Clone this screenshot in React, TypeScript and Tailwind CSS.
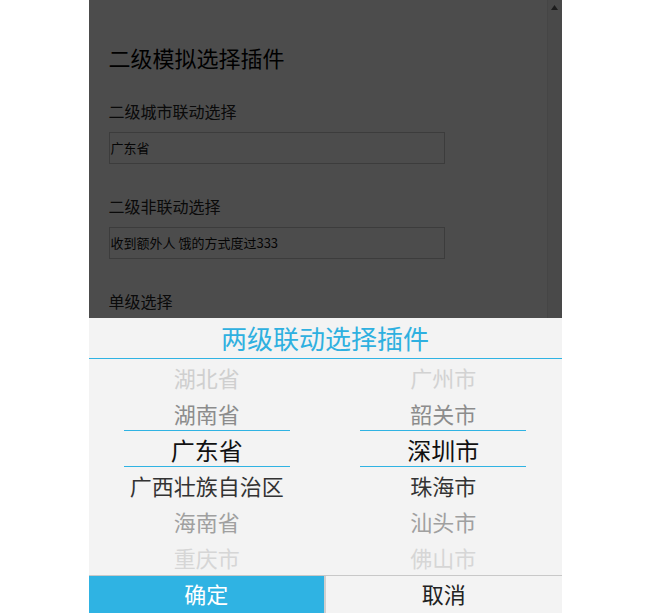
import React from "react";

const font = { fontFamily: '"Noto Sans CJK SC", "Noto Sans", sans-serif' };

type Item = { t: string; c: string; sel?: boolean };

const left: Item[] = [
  { t: "湖北省", c: "text-[#cfcfcf]" },
  { t: "湖南省", c: "text-[#8c8c8c]" },
  { t: "广东省", c: "text-[#111111]", sel: true },
  { t: "广西壮族自治区", c: "text-[#333333]" },
  { t: "海南省", c: "text-[#a0a0a0]" },
  { t: "重庆市", c: "text-[#d6d6d6]" },
];

const right: Item[] = [
  { t: "广州市", c: "text-[#d2d2d2]" },
  { t: "韶关市", c: "text-[#8c8c8c]" },
  { t: "深圳市", c: "text-[#111111]", sel: true },
  { t: "珠海市", c: "text-[#333333]" },
  { t: "汕头市", c: "text-[#a0a0a0]" },
  { t: "佛山市", c: "text-[#d6d6d6]" },
];

function Column({ items }: { items: Item[] }) {
  return (
    <div className="relative flex-1 flex flex-col items-center">
      {items.map((it) => (
        <div
          key={it.t}
          className={`h-[36px] w-full flex items-center justify-center leading-none whitespace-nowrap ${it.c} ${
            it.sel ? "text-[24px] pt-[2px]" : "text-[22px]"
          }`}
        >
          {it.t}
        </div>
      ))}
      <div className="absolute left-[15%] right-[15%] top-[71px] h-px bg-[#2fb3e3]" />
      <div className="absolute left-[15%] right-[15%] top-[107px] h-px bg-[#2fb3e3]" />
    </div>
  );
}

export default function App() {
  return (
    <div className="w-full h-[613px] bg-white flex justify-center" style={font}>
      <div className="relative w-[473px] h-[613px] overflow-hidden bg-white flex">
        {/* page */}
        <div className="flex-1 pl-[20px] pt-[42px] flex flex-col text-black">
          <div className="h-[30px] leading-[30px] text-[22px]">二级模拟选择插件</div>
          <div className="mt-[27px] h-[24px] leading-[24px] text-[16px] text-[#222]">二级城市联动选择</div>
          <div className="mt-[9px] w-[336px] h-[32px] border border-[#c8c8c8] flex items-center pl-[1px] text-[13px] text-[#111]">
            广东省
          </div>
          <div className="mt-[30px] h-[24px] leading-[24px] text-[16px] text-[#222]">二级非联动选择</div>
          <div className="mt-[9px] w-[336px] h-[32px] border border-[#c8c8c8] flex items-center pl-[1px] text-[13px] text-[#111]">
            收到额外人 饿的方式度过333
          </div>
          <div className="mt-[30px] h-[24px] leading-[24px] text-[16px] text-[#222]">单级选择</div>
        </div>
        {/* scrollbar */}
        <div className="w-[15px] h-full border-l border-[#e6e6e6] bg-[#f4f4f4] flex justify-center pt-[5px]">
          <svg width="7" height="5" viewBox="0 0 7 5">
            <path d="M3.5 0 L7 5 L0 5 Z" fill="#606060" />
          </svg>
        </div>
        {/* overlay */}
        <div className="absolute inset-0 bg-black/70" />
        {/* picker */}
        <div className="absolute left-0 right-0 bottom-0 h-[295px] bg-[#f3f3f3] flex flex-col">
          <div className="h-[41px] border-b border-[#2fb3e3] flex items-center justify-center text-[26px] text-[#2fb0e0] leading-none">
            两级联动选择插件
          </div>
          <div className="h-[216px] flex">
            <Column items={left} />
            <Column items={right} />
          </div>
          <div className="flex-1 flex border-t border-[#c8c8c8]">
            <div className="flex-1 bg-[#2fb3e3] flex items-center justify-center pb-[3px] text-white text-[22px] leading-none">
              确定
            </div>
            <div className="flex-1 border-l-2 border-[#cfcfcf] flex items-center justify-center pb-[3px] text-[#222] text-[22px] leading-none">
              取消
            </div>
          </div>
        </div>
      </div>
    </div>
  );
}
